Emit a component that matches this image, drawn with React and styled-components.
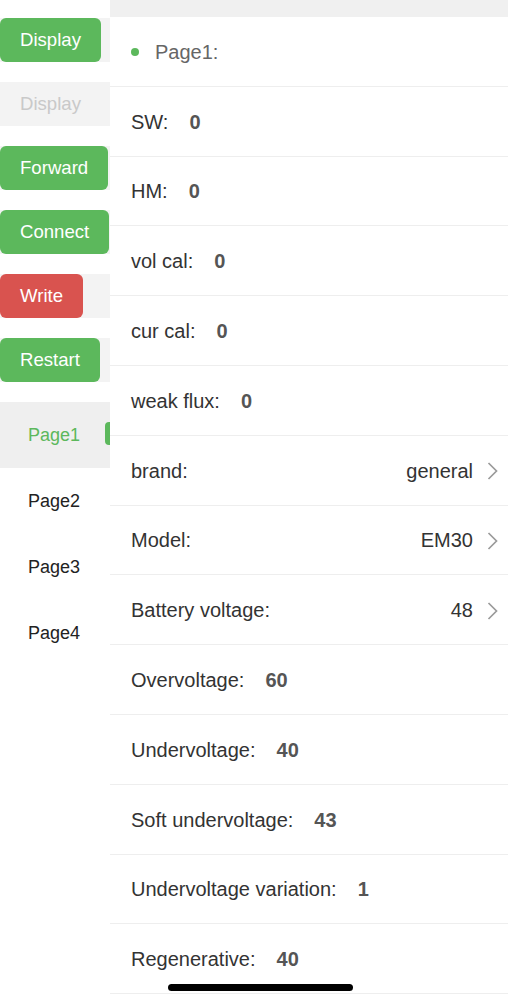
import React from 'react'
import styled, { createGlobalStyle } from 'styled-components'

const GlobalStyle = createGlobalStyle`
  html, body {
    margin: 0;
    padding: 0;
    background: #fff;
    overflow: hidden;
  }
  body {
    font-family: "Liberation Sans", Arial, sans-serif;
  }
`

const Screen = styled.div`
  display: flex;
  width: 508px;
  height: 1000px;
  background: #fff;
`

const Sidebar = styled.div`
  width: 110px;
  flex-shrink: 0;
  display: flex;
  flex-direction: column;
  padding-top: 18px;
`

const ButtonStack = styled.div`
  display: flex;
  flex-direction: column;
  gap: 20px;
`

const ButtonCell = styled.div`
  height: 44px;
  background: #f3f3f3;
  display: flex;
`

const ActionButton = styled.div`
  height: 44px;
  box-sizing: border-box;
  padding: 0 20px;
  display: flex;
  align-items: center;
  border-radius: 6px;
  font-size: 18.6px;
  color: ${p => (p.$variant === 'disabled' ? '#c9c9c9' : '#fff')};
  background: ${p =>
    p.$variant === 'danger' ? '#d9534f' : p.$variant === 'disabled' ? '#f3f3f3' : '#5cb85c'};
`

const PageList = styled.div`
  margin-top: 20px;
  display: flex;
  flex-direction: column;
`

const PageItem = styled.div`
  position: relative;
  height: 66px;
  display: flex;
  align-items: center;
  padding-left: 28px;
  font-size: 18px;
  color: ${p => (p.$active ? '#5cb85c' : '#222')};
  background: ${p => (p.$active ? '#efefef' : 'transparent')};
`

const ActiveMark = styled.span`
  position: absolute;
  right: 0;
  top: 20px;
  width: 5px;
  height: 23px;
  border-radius: 4px 0 0 4px;
  background: #5cb85c;
`

const Content = styled.div`
  flex: 1;
  display: flex;
  flex-direction: column;
  padding-top: 17px;
  background: linear-gradient(#f0f0f0 0, #f0f0f0 17px, #fff 17px);
`

const Row = styled.div`
  height: 69.8px;
  box-sizing: border-box;
  display: flex;
  align-items: center;
  padding: 2px 8px 0 21px;
  border-bottom: 1px solid #eeeeee;
  font-size: 20px;
  color: #333;
`

const Dot = styled.span`
  width: 8px;
  height: 8px;
  border-radius: 50%;
  background: #5cb85c;
  margin: 0 16px 0 0;
`

const Title = styled.span`
  color: #666;
`

const Value = styled.span`
  margin-left: 21px;
  font-weight: bold;
  color: #555;
`

const Picked = styled.span`
  margin-left: auto;
  color: #333;
`

const Chevron = () => (
  <svg width="14" height="20" viewBox="0 0 14 20" style={{ marginLeft: 13 }}>
    <path d="M2.5 2 L10.5 10 L2.5 18" fill="none" stroke="#9a9a9a" strokeWidth="1.7" />
  </svg>
)

const HomeBar = styled.div`
  position: fixed;
  left: 168px;
  top: 984px;
  width: 185px;
  height: 7px;
  border-radius: 4px;
  background: #000;
`

const buttons = [
  { label: 'Display', variant: 'ok' },
  { label: 'Display', variant: 'disabled' },
  { label: 'Forward', variant: 'ok' },
  { label: 'Connect', variant: 'ok' },
  { label: 'Write', variant: 'danger' },
  { label: 'Restart', variant: 'ok' },
]

const fields = [
  { label: 'SW:', value: '0' },
  { label: 'HM:', value: '0' },
  { label: 'vol cal:', value: '0' },
  { label: 'cur cal:', value: '0' },
  { label: 'weak flux:', value: '0' },
  { label: 'brand:', pick: 'general' },
  { label: 'Model:', pick: 'EM30' },
  { label: 'Battery voltage:', pick: '48' },
  { label: 'Overvoltage:', value: '60' },
  { label: 'Undervoltage:', value: '40' },
  { label: 'Soft undervoltage:', value: '43' },
  { label: 'Undervoltage variation:', value: '1' },
  { label: 'Regenerative:', value: '40' },
]

export default function App() {
  return (
    <>
      <GlobalStyle />
      <Screen>
        <Sidebar>
          <ButtonStack>
            {buttons.map((b, i) => (
              <ButtonCell key={i}>
                <ActionButton $variant={b.variant}>{b.label}</ActionButton>
              </ButtonCell>
            ))}
          </ButtonStack>
          <PageList>
            {['Page1', 'Page2', 'Page3', 'Page4'].map((p, i) => (
              <PageItem key={p} $active={i === 0}>
                {p}
                {i === 0 && <ActiveMark />}
              </PageItem>
            ))}
          </PageList>
        </Sidebar>
        <Content>
          <Row>
            <Dot />
            <Title>Page1:</Title>
          </Row>
          {fields.map(f => (
            <Row key={f.label}>
              {f.label}
              {f.value !== undefined && <Value>{f.value}</Value>}
              {f.pick && (
                <>
                  <Picked>{f.pick}</Picked>
                  <Chevron />
                </>
              )}
            </Row>
          ))}
        </Content>
      </Screen>
      <HomeBar />
    </>
  )
}
